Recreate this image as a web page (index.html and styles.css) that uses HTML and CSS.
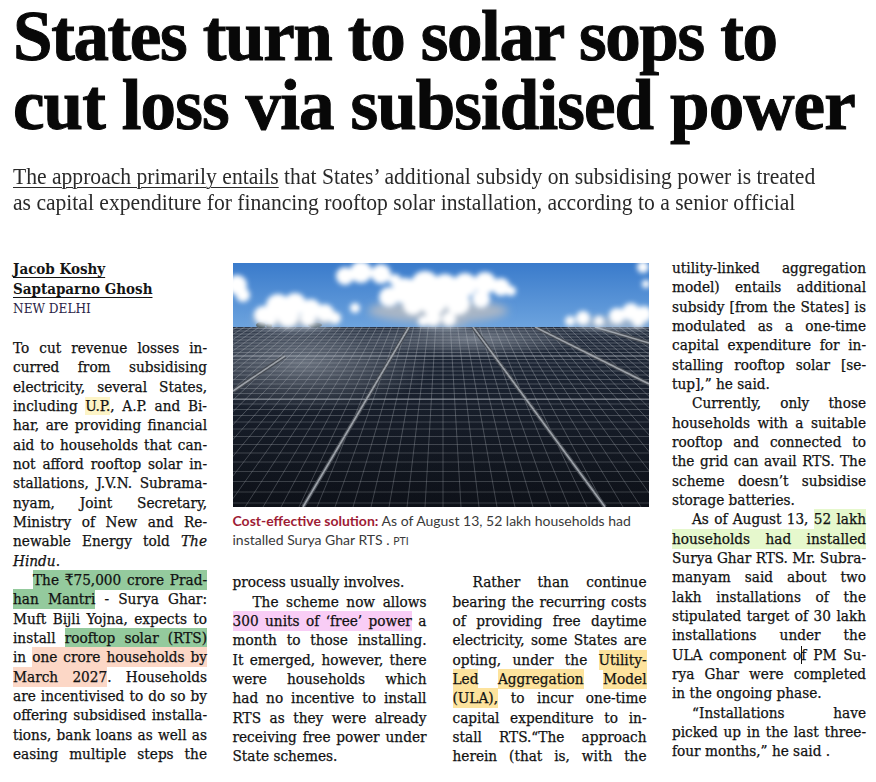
FILE: index.html
```html
<!DOCTYPE html>
<html lang="en">
<head>
<meta charset="utf-8">
<title>States turn to solar sops to cut loss via subsidised power</title>
<link rel="stylesheet" href="styles.css">
</head>
<body>
<div class="page">
  <h1 class="headline"><span class="hl1">States turn to solar sops to</span><br><span class="hl2">cut loss via subsidised power</span></h1>
  <p class="dek"><u>The approach primarily entails</u> that States’ additional subsidy on subsidising power is treated<br>as capital expenditure for financing rooftop solar installation, according to a senior official</p>

  <div class="article">
    <div class="col col1">
      <div class="byline">
        <span class="author">Jacob Koshy</span>
        <span class="author">Saptaparno Ghosh</span>
        <span class="dateline">NEW DELHI</span>
      </div>
      <div class="text">
        <p>
          <span class="l">To cut revenue losses in-</span>
          <span class="l">curred from subsidising</span>
          <span class="l">electricity, several States,</span>
          <span class="l">including <span class="hl-y">U.P.</span>, A.P. and Bi-</span>
          <span class="l">har, are providing financial</span>
          <span class="l">aid to households that can-</span>
          <span class="l">not afford rooftop solar in-</span>
          <span class="l">stallations, J.V.N. Subrama-</span>
          <span class="l">nyam, Joint Secretary,</span>
          <span class="l">Ministry of New and Re-</span>
          <span class="l">newable Energy told <i>The</i></span>
          <span class="l e"><i>Hindu</i>.</span>
        </p>
        <p>
          <span class="l i"><span class="hl-g">The ₹75,000 crore Prad-</span></span>
          <span class="l"><span class="hl-g">han Mantri</span> - Surya Ghar:</span>
          <span class="l">Muft Bijli Yojna, expects to</span>
          <span class="l">install <span class="hl-g">rooftop solar (RTS)</span></span>
          <span class="l">in <span class="hl-p">one crore households by</span></span>
          <span class="l"><span class="hl-p">March 2027</span>. Households</span>
          <span class="l">are incentivised to do so by</span>
          <span class="l">offering subsidised installa-</span>
          <span class="l">tions, bank loans as well as</span>
          <span class="l">easing multiple steps the</span>
        </p>
      </div>
    </div>

    <div class="mid">
      <svg class="photo" viewBox="0 0 416 244" width="416" height="244" aria-label="Solar panels under a blue sky">
        <defs>
          <linearGradient id="sky" x1="0" y1="0" x2="0" y2="1">
            <stop offset="0" stop-color="#3a7bcb"/>
            <stop offset="1" stop-color="#6ca3de"/>
          </linearGradient>
          <linearGradient id="pv" x1="0" y1="0" x2="0" y2="1">
            <stop offset="0" stop-color="#46546c"/>
            <stop offset="0.22" stop-color="#253043"/>
            <stop offset="1" stop-color="#0f131b"/>
          </linearGradient>
          <linearGradient id="fade" x1="0" y1="0" x2="0" y2="1">
            <stop offset="0" stop-color="#0f131b" stop-opacity="0"/>
            <stop offset="1" stop-color="#0a0d13" stop-opacity="0.35"/>
          </linearGradient>
          <radialGradient id="glare" cx="0.5" cy="0.5" r="0.5">
            <stop offset="0" stop-color="#cfd7e2" stop-opacity="0.5"/>
            <stop offset="1" stop-color="#cfd7e2" stop-opacity="0"/>
          </radialGradient>
          <filter id="soft" x="-20%" y="-40%" width="140%" height="180%"><feGaussianBlur stdDeviation="2.4"/></filter>
          <filter id="softer" x="-20%" y="-40%" width="140%" height="180%"><feGaussianBlur stdDeviation="4"/></filter>
        </defs>
        <rect width="416" height="244" fill="url(#pv)"/>
        <ellipse cx="70" cy="100" rx="130" ry="50" fill="url(#glare)"/>
        <ellipse cx="240" cy="76" rx="110" ry="18" fill="url(#glare)"/>
        <path stroke="#c8cdd5" stroke-width="0.7" stroke-opacity="0.55" fill="none" d="M210-60L-312 244M210-60L-294 244M210-60L-276 244M210-60L-258 244M210-60L-240 244M210-60L-222 244M210-60L-204 244M210-60L-186 244M210-60L-168 244M210-60L-150 244M210-60L-132 244M210-60L-114 244M210-60L-96 244M210-60L-78 244M210-60L-60 244M210-60L-42 244M210-60L-24 244M210-60L-6 244M210-60L12 244M210-60L30 244M210-60L48 244M210-60L66 244M210-60L84 244M210-60L102 244M210-60L120 244M210-60L138 244M210-60L156 244M210-60L174 244M210-60L192 244M210-60L210 244M210-60L228 244M210-60L246 244M210-60L264 244M210-60L282 244M210-60L300 244M210-60L318 244M210-60L336 244M210-60L354 244M210-60L372 244M210-60L390 244M210-60L408 244M210-60L426 244M210-60L444 244M210-60L462 244M210-60L480 244M210-60L498 244M210-60L516 244M210-60L534 244M210-60L552 244M210-60L570 244M210-60L588 244M210-60L606 244M210-60L624 244M210-60L642 244M210-60L660 244M210-60L678 244M210-60L696 244M210-60L714 244"/>
        <path stroke="#c8cdd5" stroke-width="0.7" stroke-opacity="0.5" fill="none" d="M0 240H416M0 229H416M0 218.5H416M0 208.5H416M0 199H416M0 190H416M0 181.5H416M0 173.5H416M0 166H416M0 159H416M0 152.5H416M0 146.5H416M0 141H416M0 135.5H416M0 130.5H416M0 125.5H416M0 121H416M0 116.5H416M0 112H416M0 108H416M0 104H416M0 100H416M0 96.5H416M0 93H416M0 89.5H416M0 86H416M0 83H416M0 80H416M0 77H416M0 74H416M0 71H416M0 68H416M0 65.5H416"/>
        <rect width="416" height="244" fill="url(#fade)"/>
        <g fill="none">
          <path d="M176 64L70 244M240 64L372 244M302 64L416 121M362 64L416 80M52 93L0 128" stroke="#474c54" stroke-width="4"/>
          <path d="M176 64L70 244M240 64L372 244M302 64L416 121M362 64L416 80M52 93L0 128" stroke="#9ca1a8" stroke-width="1.6"/>
          <path d="M0 93H416M0 136.5H416" stroke="#aab1ba" stroke-width="1.1" stroke-opacity="0.6"/>
        </g>
        <rect width="416" height="64" fill="url(#sky)"/>
        <g fill="#2a3530" opacity="0.85">
          <ellipse cx="28" cy="62" rx="5" ry="3"/>
          <ellipse cx="36" cy="62.5" rx="3" ry="2"/>
          <ellipse cx="82" cy="62" rx="7" ry="2.5"/>
        </g>
        <g fill="#a9b6c6" filter="url(#softer)">
          <ellipse cx="62" cy="57" rx="42" ry="8"/>
          <ellipse cx="205" cy="48" rx="70" ry="12"/>
          <ellipse cx="210" cy="60" rx="24" ry="5"/>
          <ellipse cx="378" cy="60" rx="40" ry="5"/>
        </g>
        <g fill="#ffffff" filter="url(#soft)">
          <circle cx="4" cy="22" r="10"/><circle cx="10" cy="32" r="7"/>
          <circle cx="30" cy="52" r="9"/><circle cx="45" cy="43" r="12"/><circle cx="62" cy="41" r="11"/><circle cx="78" cy="46" r="10"/><circle cx="92" cy="50" r="9"/><circle cx="102" cy="55" r="6"/><circle cx="55" cy="53" r="11"/><circle cx="75" cy="55" r="8"/><circle cx="38" cy="57" r="6"/>
          <circle cx="112" cy="13" r="9"/><circle cx="128" cy="9" r="11"/><circle cx="148" cy="11" r="10"/><circle cx="162" cy="17" r="6"/>
          <circle cx="156" cy="34" r="10"/><circle cx="172" cy="28" r="13"/><circle cx="192" cy="22" r="14"/><circle cx="212" cy="24" r="13"/><circle cx="232" cy="22" r="12"/><circle cx="252" cy="20" r="11"/><circle cx="268" cy="24" r="9"/><circle cx="278" cy="28" r="5"/>
          <circle cx="200" cy="38" r="14"/><circle cx="225" cy="40" r="12"/><circle cx="180" cy="42" r="10"/><circle cx="248" cy="36" r="9"/>
          <circle cx="200" cy="55" r="8"/><circle cx="216" cy="56" r="7"/><circle cx="190" cy="58" r="5"/>
          <circle cx="122" cy="45" r="5"/>
          <circle cx="337" cy="58" r="5"/><circle cx="350" cy="55" r="7"/><circle cx="366" cy="58" r="5"/><circle cx="384" cy="53" r="8"/><circle cx="398" cy="49" r="9"/><circle cx="411" cy="51" r="8"/><circle cx="405" cy="58" r="6"/>
          <circle cx="410" cy="4" r="6"/><circle cx="413" cy="21" r="4"/>
        </g>
      </svg>
      <p class="caption"><b>Cost-effective solution:</b> As of August 13, 52 lakh households had<br>installed Surya Ghar RTS . <span class="src">PTI</span></p>

      <div class="midcols">
        <div class="col text">
          <p>
            <span class="l e">process usually involves.</span>
          </p>
          <p>
            <span class="l i">The scheme now allows</span>
            <span class="l"><span class="hl-pk">300 units of ‘free’ power</span> a</span>
            <span class="l">month to those installing.</span>
            <span class="l">It emerged, however, there</span>
            <span class="l">were households which</span>
            <span class="l">had no incentive to install</span>
            <span class="l">RTS as they were already</span>
            <span class="l">receiving free power under</span>
            <span class="l e">State schemes.</span>
          </p>
        </div>
        <div class="col text">
          <p>
            <span class="l i">Rather than continue</span>
            <span class="l">bearing the recurring costs</span>
            <span class="l">of providing free daytime</span>
            <span class="l">electricity, some States are</span>
            <span class="l">opting, under the <span class="hl-o">Utility-</span></span>
            <span class="l"><span class="hl-o">Led</span> <span class="hl-o">Aggregation</span> <span class="hl-o">Model</span></span>
            <span class="l"><span class="hl-o">(ULA),</span> to incur one-time</span>
            <span class="l">capital expenditure to in-</span>
            <span class="l">stall RTS.“The approach</span>
            <span class="l">herein (that is, with the</span>
          </p>
        </div>
      </div>
    </div>

    <div class="col col4 text">
      <p>
        <span class="l">utility-linked aggregation</span>
        <span class="l">model) entails additional</span>
        <span class="l">subsidy [from the States] is</span>
        <span class="l">modulated as a one-time</span>
        <span class="l">capital expenditure for in-</span>
        <span class="l">stalling rooftop solar [se-</span>
        <span class="l e">tup],” he said.</span>
      </p>
      <p>
        <span class="l i">Currently, only those</span>
        <span class="l">households with a suitable</span>
        <span class="l">rooftop and connected to</span>
        <span class="l">the grid can avail RTS. The</span>
        <span class="l">scheme doesn’t subsidise</span>
        <span class="l e">storage batteries.</span>
      </p>
      <p>
        <span class="l i">As of August 13, <span class="hl-lg">52 lakh</span></span>
        <span class="l"><span class="hl-lg">households had installed</span></span>
        <span class="l">Surya Ghar RTS. Mr. Subra-</span>
        <span class="l">manyam said about two</span>
        <span class="l">lakh installations of the</span>
        <span class="l">stipulated target of 30 lakh</span>
        <span class="l">installations under the</span>
        <span class="l">ULA component o<span class="caret"></span>f PM Su-</span>
        <span class="l">rya Ghar were completed</span>
        <span class="l e">in the ongoing phase.</span>
      </p>
      <p>
        <span class="l i">“Installations have</span>
        <span class="l">picked up in the last three-</span>
        <span class="l e">four months,” he said .</span>
      </p>
    </div>
  </div>
</div>
</body>
</html>
```

FILE: styles.css
```css
* { box-sizing: border-box; }

html, body {
  margin: 0;
  padding: 0;
  background: #ffffff;
}

body {
  font-family: "DejaVu Serif", serif;
  color: #151515;
}

.page {
  width: 876px;
  padding-left: 13px;
}

.headline {
  margin: 0;
  padding-top: 1.5px;
  font-family: "Liberation Serif", serif;
  font-weight: 700;
  font-size: 71px;
  line-height: 69px;
  color: #080808;
  white-space: nowrap;
  -webkit-text-stroke: 1px #080808;
}

.hl1 {
  letter-spacing: -1.35px;
}

.hl2 {
  letter-spacing: -0.9px;
}

.dek {
  margin: 23.7px 0 0;
  font-family: "Liberation Serif", serif;
  font-size: 24px;
  line-height: 26px;
  color: #2a2a2a;
  white-space: nowrap;
  transform: scaleX(0.9);
  transform-origin: 0 0;
}

.dek u {
  text-decoration-thickness: 1.4px;
  text-underline-offset: 3px;
}

.article {
  display: flex;
  align-items: flex-start;
  gap: 25.5px;
  margin-top: 43.8px;
}

.col {
  width: 194px;
  flex: none;
}

.mid {
  width: 414px;
  flex: none;
}

.photo {
  display: block;
  width: 416px;
  height: 244px;
  margin-top: 4px;
}

.caption {
  margin: 3.6px 0 0;
  font-family: Lato, "Open Sans", sans-serif;
  font-size: 14px;
  line-height: 19.3px;
  color: #3a3a3a;
}

.caption b {
  color: #9e1c35;
  font-weight: 700;
}

.caption .src {
  font-size: 10.5px;
}

.midcols {
  display: flex;
  gap: 26px;
  margin-top: 22.3px;
}

.byline {
  font-family: "DejaVu Serif Condensed", "DejaVu Serif", serif;
  font-stretch: condensed;
}

.author {
  display: block;
  font-weight: 700;
  font-size: 15px;
  line-height: 20px;
  text-decoration: underline;
  text-decoration-thickness: 1px;
  text-underline-offset: 3px;
  color: #141414;
}

.dateline {
  display: block;
  font-size: 13.5px;
  line-height: 18px;
  color: #2a2447;
}

.text {
  font-family: "DejaVu Serif Condensed", "DejaVu Serif", serif;
  font-stretch: condensed;
  font-size: 15.2px;
  line-height: 19.33px;
  color: #111111;
  -webkit-text-stroke: 0.25px #111111;
}

.col1 .text {
  margin-top: 22px;
}

.text p {
  margin: 0;
}

.l {
  display: block;
  text-align: justify;
  text-align-last: justify;
}

.l.e {
  text-align-last: left;
}

.l.i {
  text-indent: 20px;
}

.hl-y  { background: #fdf4c6; }
.hl-g  { background: #94ca9d; padding: 1px 0; }
.hl-p  { background: #fcd7c6; padding: 1px 0; }
.hl-pk { background: #f9cdf6; padding: 1px 0; }
.hl-o  { background: #fde39d; padding: 1px 0; }
.hl-lg { background: #e6f8cd; padding: 1px 0; }

.caret {
  border-left: 1px solid #111;
  margin-right: -1px;
}
```
